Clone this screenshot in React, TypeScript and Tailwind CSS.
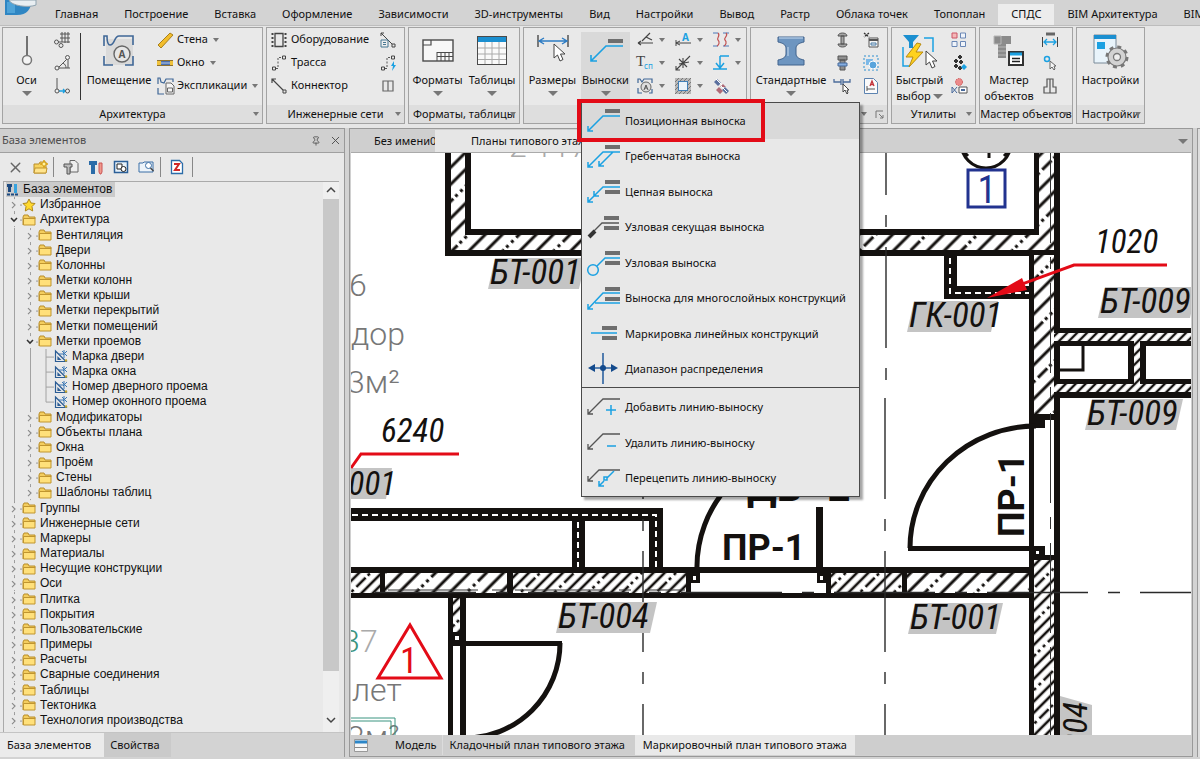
import type { ReactNode } from 'react';
import { X, Pin } from 'lucide-react';

const RIBBON_TABS = [
  'Главная',
  'Построение',
  'Вставка',
  'Оформление',
  'Зависимости',
  '3D-инструменты',
  'Вид',
  'Настройки',
  'Вывод',
  'Растр',
  'Облака точек',
  'Топоплан',
  'СПДС',
  'BIM Архитектура',
  'BIM Конструкции',
];

type TreeItem = { label: string; level: number; kind?: 'star' | 'mark'; open?: boolean; last?: boolean };

const TREE: TreeItem[] = [
  { label: 'Избранное', level: 1, kind: 'star' },
  { label: 'Архитектура', level: 1, open: true },
  { label: 'Вентиляция', level: 2 },
  { label: 'Двери', level: 2 },
  { label: 'Колонны', level: 2 },
  { label: 'Метки колонн', level: 2 },
  { label: 'Метки крыши', level: 2 },
  { label: 'Метки перекрытий', level: 2 },
  { label: 'Метки помещений', level: 2 },
  { label: 'Метки проемов', level: 2, open: true },
  { label: 'Марка двери', level: 3, kind: 'mark' },
  { label: 'Марка окна', level: 3, kind: 'mark' },
  { label: 'Номер дверного проема', level: 3, kind: 'mark' },
  { label: 'Номер оконного проема', level: 3, kind: 'mark', last: true },
  { label: 'Модификаторы', level: 2 },
  { label: 'Объекты плана', level: 2 },
  { label: 'Окна', level: 2 },
  { label: 'Проём', level: 2 },
  { label: 'Стены', level: 2 },
  { label: 'Шаблоны таблиц', level: 2 },
  { label: 'Группы', level: 1 },
  { label: 'Инженерные сети', level: 1 },
  { label: 'Маркеры', level: 1 },
  { label: 'Материалы', level: 1 },
  { label: 'Несущие конструкции', level: 1 },
  { label: 'Оси', level: 1 },
  { label: 'Плитка', level: 1 },
  { label: 'Покрытия', level: 1 },
  { label: 'Пользовательские', level: 1 },
  { label: 'Примеры', level: 1 },
  { label: 'Расчеты', level: 1 },
  { label: 'Сварные соединения', level: 1 },
  { label: 'Таблицы', level: 1 },
  { label: 'Тектоника', level: 1 },
  { label: 'Технология производства', level: 1 },
];

const CYAN = '#1ba1e2';
const INK = '#4a4a4a';
const NAVY = '#3f6797';

const Svg = ({ w = 16, h = 16, children }: { w?: number; h?: number; children: ReactNode }) => (
  <svg width={w} height={h} viewBox={`0 0 ${w} ${h}`} fill="none" className="shrink-0 overflow-visible" aria-hidden="true">
    {children}
  </svg>
);

const Caret = ({ big = false }: { big?: boolean }) =>
  big ? (
    <Svg w={10} h={5}><path d="M0 0h10L5 5z" fill="#777" /></Svg>
  ) : (
    <Svg w={6} h={4}><path d="M0 0h6L3 4z" fill="#777" /></Svg>
  );

/* ---------- large ribbon icons ---------- */

const AxisIcon = () => (
  <Svg w={32} h={32}>
    <path d="M16 1v20" stroke={INK} strokeWidth="1.5" />
    <circle cx="16" cy="25" r="4.5" stroke="#777" strokeWidth="1.5" fill="#f4f4f4" />
  </Svg>
);

const RoomIcon = () => (
  <Svg w={32} h={32}>
    <rect x="3" y="4" width="27" height="26" fill="#dadada" />
    <path d="M1 11V1h3c0 4 0 9 3 9 5 0 4-9 9-9h14v9M1 21v9h9M22 30h8v-9" stroke={NAVY} strokeWidth="1.6" />
    <circle cx="19" cy="19" r="8" stroke="#666" strokeWidth="1.4" fill="#e6e6e6" />
    <text x="19" y="23" textAnchor="middle" fontSize="10" fontWeight="bold" fill="#555">A</text>
  </Svg>
);

const FormatsIcon = () => (
  <Svg w={32} h={32}>
    <rect x="1" y="5" width="30" height="21" stroke={INK} fill="#f7f7f7" strokeWidth="1.4" />
    <path d="M1 10h8V5" stroke={INK} strokeWidth="1.2" />
    <path d="M15 17.5h16M15 21.5h16M15 17v9M19 17v9M23 17v9M27 17v9" stroke={INK} />
  </Svg>
);

const TablesIcon = () => (
  <Svg w={32} h={32}>
    <rect x="1.5" y="1.5" width="29" height="28" stroke={INK} fill="#fafafa" />
    <rect x="2" y="2" width="28" height="5" fill="#1b8fd0" />
    <path d="M2 13h28M2 19h28M2 24.5h28M9 7v22M16 7v22M23 7v22" stroke="#aaa" />
  </Svg>
);

const CursorShape = ({ x, y }: { x: number; y: number }) => (
  <path
    transform={`translate(${x} ${y})`}
    d="M0 0v14l3.5-3 2.5 6 3-1.5-2.5-5.5H11z"
    fill="#fff"
    stroke="#444"
  />
);

const DimensionsIcon = () => (
  <Svg w={32} h={32}>
    <path d="M1 0v12M31 0v12" stroke={INK} strokeWidth="1.4" />
    <path d="M2 6h28M7 3 2 6l5 3M25 3l5 3-5 3" stroke="#2d7cc4" strokeWidth="1.4" />
    <CursorShape x={17} y={9} />
  </Svg>
);

const LeadersIcon = () => (
  <Svg w={34} h={32}>
    <rect x="19" y="4" width="15" height="4" fill="#6e6e6e" />
    <path d="M34 11H17L2 26M2 20v6h6" stroke={CYAN} strokeWidth="1.6" />
  </Svg>
);

const BeamIcon = () => (
  <Svg w={32} h={32}>
    <path
      d="M3 2h26v5c-5 1-8 3-8 6v6c0 3 3 5 8 6v5H3v-5c5-1 8-3 8-6v-6c0-3-3-5-8-6z"
      fill="#6d95c0"
      stroke="#41638d"
      strokeLinejoin="round"
    />
    <path d="M4 3h24M13 12v9" stroke="#a9c4df" strokeWidth="1.5" />
  </Svg>
);

const QuickSelectIcon = () => (
  <Svg w={36} h={32}>
    <path d="M1 0h16l-6 7v6H7V7z" fill="#1b8fd0" />
    <path d="M22 3h9v14M1 12v19h7" stroke={CYAN} strokeWidth="1.5" />
    <path d="M15 8 4 22h7L7 32 21 17h-7l5-8z" fill="#ffd21f" stroke="#b88a12" />
    <CursorShape x={24} y={16} />
  </Svg>
);

const WizardIcon = () => (
  <Svg w={32} h={32}>
    <path d="M1 1h17v8H1zM5 9h8v14H5z" fill="#8b8b8b" />
    <path d="M1 1h7v8H1zM5 12h8M5 16h8M5 20h8" stroke="#b7b7b7" />
    <rect x="16" y="17" width="14" height="13" fill="#fff" stroke="#333" strokeWidth="2" />
    <path d="M17 19h12" stroke={CYAN} strokeWidth="3" />
    <path d="M19 23.5h8M19 26.5h8" stroke="#222" strokeWidth="1.5" />
  </Svg>
);

const SettingsIcon = () => (
  <Svg w={36} h={32}>
    <path d="M1 0h22v28H1z" fill="#e9f4fb" stroke="#7a8b99" />
    <path d="M1 0h22v4H1z" fill="#1b8fd0" />
    <path d="M4 7h8v7H4z" fill={CYAN} />
    <circle cx="24" cy="22" r="10" stroke="#777" strokeWidth="3" strokeDasharray="3.9 3.95" />
    <circle cx="24" cy="22" r="9" fill="#d2d2d2" stroke="#777" strokeWidth="1.2" />
    <circle cx="24" cy="22" r="3.5" fill="#eee" stroke="#777" strokeWidth="1.3" />
  </Svg>
);

/* ---------- small ribbon icons ---------- */

const GridAxes = () => (
  <Svg>
    <path d="M6 2h10M6 6h10M4 10h12M8 0v10M11 0v11M14 0v11" stroke="#555" />
    <circle cx="2.5" cy="10" r="2" stroke="#555" /><circle cx="7" cy="13.5" r="2" stroke="#555" />
  </Svg>
);

const ArcAxes = () => (
  <Svg>
    <path d="M4 13h12M5 12l8-8M14 5v8M9 8c2 1 3 3 3 5" stroke="#555" />
    <circle cx="3" cy="13" r="2" stroke="#555" fill="#eee" /><circle cx="13.5" cy="2.5" r="2" stroke="#555" fill="#eee" />
  </Svg>
);

const AxisShift = () => (
  <Svg>
    <path d="M3 0v11" stroke="#555" /><path d="M5 13h7M9 11l2 2-2 2" stroke={CYAN} strokeWidth="1.3" />
    <circle cx="3" cy="13" r="2" stroke="#555" fill="#eee" /><circle cx="13.5" cy="13" r="2" stroke="#555" fill="#eee" />
  </Svg>
);

const WallIcon = () => (
  <Svg>
    <path d="M1 13 13 1l3 2L4 16z" fill="#f2bd2c" stroke="#a8801c" />
  </Svg>
);

const WindowIcon = () => (
  <Svg>
    <path d="M0 5h16v6H0z" fill="#f0c23b" /><path d="M4 5h9v6H4z" fill="#4a6fae" />
    <path d="M0 5.5h16M0 10.5h16" stroke="#8d7130" />
    <path d="M4 8h9" stroke="#b8cdea" />
  </Svg>
);

const ExplicationIcon = () => (
  <Svg w={18} h={18}>
    <path d="M1 7V1h2l1 4 3 1 2-4h7v3M1 11v6h6" stroke={NAVY} strokeWidth="1.2" />
    <path d="M9 6h5l3 3v8H9z" fill="#f5f5f5" stroke="#666" /><path d="M10.5 11h5v4h-5z" stroke="#666" />
  </Svg>
);

const EquipmentIcon = () => (
  <Svg>
    <path d="M4 1.5h8v13H4z" stroke="#444" strokeWidth="1.3" />
    <path d="M1.5 1v14M14.5 1v14" stroke="#444" strokeWidth="2" strokeDasharray="2 2" />
  </Svg>
);

const RouteIcon = () => (
  <Svg>
    <path d="M5 13.5h2v-11h4" stroke="#555" strokeDasharray="2 1.5" />
    <path d="M1.5 12h3v3h-3zM11.5 1h3v3h-3z" stroke="#444" />
  </Svg>
);

const ConnectorIcon = () => (
  <Svg>
    <path d="m1 1 11 11M1 5V1h4" stroke="#444" strokeWidth="1.2" /><path d="M12 12h3v3h-3z" stroke="#444" />
  </Svg>
);

const EquipLeader = () => (
  <Svg>
    <path d="m1 1 11 11M1 4V1h3M12 12h3v3h-3z" stroke="#444" /><path d="M1 8h7v7H1z" fill="#eee" stroke="#477791" />
    <path d="M3 10.5h3M3 12.5h3" stroke="#477791" />
  </Svg>
);

const RouteElectric = () => (
  <Svg>
    <path d="M5 13.5h2v-11h4" stroke="#555" strokeDasharray="2 1.5" />
    <path d="M1.5 12h3v3h-3zM11.5 1h3v3h-3z" stroke="#444" /><path d="m14 6-3 5h2l-1 5 4-6h-2z" fill={CYAN} />
  </Svg>
);

const BookIcon = () => (
  <Svg><path d="M3 3h10v10H3zM8 3v10" stroke="#666" strokeWidth="1.2" /></Svg>
);

const LevelMark = () => (
  <Svg><path d="M1 11h15M1 11l3-2M1 11l3 2M5 9l8-8M9 5l6 3" stroke="#444" strokeWidth="1.2" /></Svg>
);

const TextSp = () => (
  <Svg>
    <text x="-1" y="11" fontSize="15" fontFamily="Liberation Serif, serif" fill="#444">T</text>
    <text x="7" y="14" fontSize="8" fontFamily="Noto Sans, sans-serif" fill={CYAN}>сп</text>
  </Svg>
);

const RoomMark = () => (
  <Svg>
    <path d="M1 5V1h2l2 3 2-3h8v4M1 10v5h4M12 15h3v-4" stroke={NAVY} strokeWidth="1.2" />
    <circle cx="9" cy="9" r="5" fill="#ddd" stroke="#666" /><path d="m7 12 2-5 2 5M8 10h2" stroke="#555" />
  </Svg>
);

const TextLeader = () => (
  <Svg>
    <text x="7" y="9" fontSize="10" fontWeight="bold" fontFamily="Noto Sans, sans-serif" fill={CYAN}>A</text>
    <path d="M1 8v6M1 11h15M1 11l4-2M1 11l4 2" stroke="#444" />
  </Svg>
);

const BreakMark = () => (
  <Svg><path d="M1 15 15 1M4 4l8 8M8 3v10M4 9l10-2M1 11v4h4" stroke="#444" strokeWidth="1.1" /></Svg>
);

const FrameIcon = () => (
  <Svg>
    <rect width="16" height="16" fill="#b8b8b8" />
    <path d="M0 4 4 0M0 8l8-8M0 12 12 0M0 16 16 0M4 16 16 4M8 16l8-8M12 16l4-4" stroke="#777" />
    <rect x="3.5" y="3.5" width="9" height="9" fill="#eaf3fa" stroke="#3f7fb8" />
  </Svg>
);

const BreakLines = () => (
  <Svg>
    <path d="M0 1h5M10 1h6M0 14h5M10 14h6" stroke="#4a78b8" />
    <path d="M5 1c3 3-2 5 0 7s1 5-1 6M13 1c3 3-3 5-1 7s1 5-1 6" stroke="#c25353" strokeWidth="1.2" />
  </Svg>
);

const ElevationIcon = () => (
  <Svg><path d="M0 14h14M7 1v12M3 8l4 5 4-5M7 1h9" stroke={CYAN} strokeWidth="1.5" /></Svg>
);

const HatchMarks = () => (
  <Svg>
    <path d="m1 4 3-3 4 4-3 3zM9 12l3-3 4 4-3 3z" fill="#5a6f9e" /><path d="m7 9 3-3 3 3M3 12l3-3 4 4-3 3z" fill="#b06a76" />
    <path d="m3 1 6 6M8 8l6 6" stroke="#fff" />
  </Svg>
);

const BoltIcon = () => (
  <Svg>
    <path d="M4 4c0-4 9-4 9 0zM7 4h3v8H7zM4 12h9c0 4-9 4-9 0z" fill="#a5a5a5" stroke="#555" />
  </Svg>
);

const NutIcon = () => (
  <Svg>
    <path d="M4 1h9v4H4zM6 5h5v10H6z" fill="#8f8f8f" stroke="#555" /><path d="M4 8h9v3H4z" fill="#86aee0" stroke="#466a9b" />
  </Svg>
);

const WeldIcon = () => (
  <Svg>
    <path d="M0 1v3h7v3M16 1v3H9v3M7 1v3M9 1v3" stroke="#4c6c9b" strokeWidth="1.3" />
    <path d="M9 6v8l2-2 2 4 1-1-1-3h2z" fill="#fff" stroke="#444" />
  </Svg>
);

const SchemaIcon = () => (
  <Svg>
    <path d="m1 1 5 4M6 1 1 5" stroke="#333" strokeWidth="1.3" strokeDasharray="2 1" />
    <path d="M6 6h9v9H6z" fill="#f5f5f5" stroke="#555" /><path d="M6 8h9" stroke="#555" strokeWidth="2" /><path d="M8 11h5v2H8z" stroke="#477ba6" />
  </Svg>
);

const RegionIcon = () => (
  <Svg>
    <rect x="1" y="1" width="14" height="14" stroke="#2c8fd0" strokeDasharray="2 2" />
    <path d="M3 4h7v6H3z" fill="#7cb9e8" /><circle cx="10" cy="10" r="4" fill="#58a4dc" stroke="#fff" />
  </Svg>
);

const SheetIcon = () => (
  <Svg>
    <path d="M1.5.5h9l4 4v11h-13z" fill="#fafafa" stroke="#5c83b0" />
    <path d="m7 8 2-5 2 5M8 6.5h2" stroke="#c4343a" strokeWidth="1.3" /><path d="M4 8v5M4 11h8" stroke="#555" />
  </Svg>
);

const ObjectsIcon = () => (
  <Svg>
    <path d="M1 1h5v5H1z" fill="#f4b8b8" stroke="#c56" /><path d="M9.5 1h5v5h-5zM1 9.5h5v5H1zM9.5 9.5h5v5h-5z" fill="#f0f4fa" stroke="#6a87b5" />
  </Svg>
);

const PatternIcon = () => (
  <Svg>
    <path d="m9 0 2 2-2 2-2-2zM5 4l2 2-2 2-2-2zM10 5l2 2-2 2-2-2zM5 9l2 2-2 2-2-2zM9 11l2 2-2 2-2-2z" fill="#333" stroke="#333" />
    <path d="m13 9 3 3-3 3-3-3z" fill={CYAN} />
  </Svg>
);

const FindObjects = () => (
  <Svg>
    <circle cx="8" cy="4" r="3.5" fill="#ec8a8a" stroke="#c55" strokeDasharray="1.5 1" />
    <path d="m1 9 5 6M6 9l-5 6M1 9v6" stroke="#47699b" /><path d="M8 9h8v6H8z" fill="#fff" stroke="#555" /><path d="M10 12h4" stroke="#47699b" strokeWidth="2" />
  </Svg>
);

const WidthIcon = () => (
  <Svg>
    <path d="M4 2h9" stroke="#666" strokeWidth="3" /><path d="M.5 5v10M15.5 5v10" stroke="#444" />
    <path d="M2 10h12M5 7l-3 3 3 3M11 7l3 3-3 3" stroke={CYAN} strokeWidth="1.3" />
  </Svg>
);

const PickIcon = () => (
  <Svg>
    <circle cx="5" cy="4" r="2.5" stroke={CYAN} strokeWidth="1.5" />
    <path d="M8 6v8l2-2 2 3 1-1-1-3h2z" fill="#f5f5f5" stroke="#666" />
  </Svg>
);

const ProfileIcon = () => (
  <Svg><path d="M5 1h6v8h3v6H2V9h3zM8 1v14" stroke="#555" strokeWidth="1.2" /></Svg>
);

/* ---------- ribbon building blocks ---------- */

const RibbonGroup = ({ title, className, launcher, children }: { title: string; className: string; launcher?: boolean; children: ReactNode }) => (
  <section className={`flex shrink-0 flex-col border border-[#a3a3a3] bg-[#e9e9e9] ${className}`}>
    <div className="flex min-h-0 flex-1">{children}</div>
    <div className="relative flex h-[18px] items-center justify-center bg-[#dedede]">
      <span className="whitespace-nowrap">{title}</span>
      <span className="absolute inset-y-0 right-[3px] flex items-center gap-2">
        <Caret />
        {launcher && (
          <Svg w={9} h={9}><path d="M1 8V1h7M4 4l4 4M8 5v3H5" stroke="#777" /></Svg>
        )}
      </span>
    </div>
  </section>
);

const BigButton = ({ icon, label, second, caret = true, className }: { icon: ReactNode; label: string; second?: string; caret?: boolean; className: string }) => (
  <button type="button" className={`flex shrink-0 flex-col items-center whitespace-nowrap ${className}`}>
    {icon}
    <span className="mt-[5px] leading-4">{label}</span>
    {second ? (
      <span className="flex items-center gap-[2px] leading-4">
        {second}
        {caret && <Caret big />}
      </span>
    ) : (
      caret && <span className="mt-[3px]"><Caret big /></span>
    )}
  </button>
);

const SmallColumn = ({ items, caret, className }: { items: { name: string; icon: ReactNode; plain?: boolean }[]; caret?: boolean; className: string }) => (
  <div className={`flex shrink-0 flex-col ${className}`}>
    {items.map((item) => (
      <button key={item.name} type="button" aria-label={item.name} className="flex h-[23px] items-center gap-[6px]">
        {item.icon}
        {caret && !item.plain && <Caret />}
      </button>
    ))}
  </div>
);

const LabelRow = ({ icon, label, caret }: { icon: ReactNode; label: string; caret?: boolean }) => (
  <button type="button" className="flex h-[23px] items-center whitespace-nowrap">
    <span className="w-5">{icon}</span>
    <span className="mr-[5px]">{label}</span>
    {caret && <Caret />}
  </button>
);

/* ---------- leader menu ---------- */

const Bars = ({ double = false, x = 18 }: { double?: boolean; x?: number }) => (
  <>
    <rect x={x} y="0" width="15" height="4" fill="#6e6e6e" />
    {double && <rect x={x} y="10" width="15" height="4" fill="#6e6e6e" />}
  </>
);

const MENU_TOP = [
  {
    label: 'Позиционная выноска',
    icon: <><Bars /><path d="M33 7H16L1 22M1 17v5h5" stroke={CYAN} strokeWidth="1.5" /></>,
  },
  {
    label: 'Гребенчатая выноска',
    icon: <><Bars /><path d="M33 7H16L1 22M1 17v5h5M26 7 12 21M12 16v5h5" stroke={CYAN} strokeWidth="1.5" /></>,
  },
  {
    label: 'Цепная выноска',
    icon: <><Bars double /><path d="M33 7H16L1 22M1 17v5h5M7 11v5h5" stroke={CYAN} strokeWidth="1.5" /></>,
  },
  {
    label: 'Узловая секущая выноска',
    icon: <><Bars double x={17} /><path d="M32 7H15L2 20" stroke="#555" strokeWidth="1.3" /><path d="m2 21 6-6" stroke="#333" strokeWidth="4" /></>,
  },
  {
    label: 'Узловая выноска',
    icon: <><Bars double /><path d="M33 7H18l-8 8" stroke={CYAN} strokeWidth="1.5" /><circle cx="6" cy="19" r="5.3" stroke={CYAN} strokeWidth="1.5" /></>,
  },
  {
    label: 'Выноска для многослойных конструкций',
    icon: <><Bars double /><path d="M33 6H16L1 22M1 17v5h5M33 16H8" stroke={CYAN} strokeWidth="1.5" /></>,
  },
  {
    label: 'Маркировка линейных конструкций',
    icon: <g transform="translate(0 4)"><Bars double x={15} /><path d="M4 7h26" stroke={CYAN} strokeWidth="1.5" /></g>,
  },
  {
    label: 'Диапазон распределения',
    icon: (
      <>
        <path d="M16 -5v31M5 10h22" stroke="#2c62a0" strokeWidth="1.6" />
        <path d="m1 10 7-4v8zM31 10l-7-4v8z" fill="#134a8c" />
        <circle cx="16" cy="10" r="3" fill="#134a8c" />
      </>
    ),
  },
];

const MENU_BOTTOM = [
  {
    label: 'Добавить линию-выноску',
    icon: <><path d="M33 3H16L1 18M1 13v5h5" stroke="#555" strokeWidth="1.3" /><path d="M19 14h10M24 9v10" stroke={CYAN} strokeWidth="1.5" /></>,
  },
  {
    label: 'Удалить линию-выноску',
    icon: <><path d="M33 3H16L1 18M1 13v5h5" stroke="#555" strokeWidth="1.3" /><path d="M20 15h9" stroke={CYAN} strokeWidth="1.5" /></>,
  },
  {
    label: 'Перецепить линию-выноску',
    icon: <><path d="M33 3H12L1 14M1 9v5h5" stroke="#555" strokeWidth="1.3" /><path d="m27 4-7 7M17 14l-5 5M12 14v5h5M17 10h3v3h-3z" stroke={CYAN} strokeWidth="1.5" /></>,
  },
];

const MenuItem = ({ label, icon, active }: { label: string; icon: ReactNode; active?: boolean }) => (
  <button
    type="button"
    role="menuitem"
    className={`relative flex w-full items-center gap-[4px] pl-[5px] text-left whitespace-nowrap ${active ? 'bg-[#d9d9d9]' : ''}`}
  >
    <svg width="34" height="23" viewBox="0 0 34 23" fill="none" className="shrink-0 overflow-visible" aria-hidden="true">{icon}</svg>
    <span>{label}</span>
    {active && <span className="absolute -top-1 -left-[5px] h-[43px] w-[188px] border-4 border-[#e30b17]" />}
  </button>
);

const LeaderMenu = () => (
  <div role="menu" className="absolute top-[70px] left-0 z-20 w-[279px] border border-[#4a4a4a] bg-[#e8e8e8] shadow-[3px_3px_2px_rgba(0,0,0,0.35)]">
    <div className="grid h-[284px] auto-rows-fr">
      {MENU_TOP.map((item, i) => (
        <MenuItem key={item.label} {...item} active={i === 0} />
      ))}
    </div>
    <div className="grid h-[109px] auto-rows-fr border-t border-[#4a4a4a] pt-[2px]">
      {MENU_BOTTOM.map((item) => (
        <MenuItem key={item.label} {...item} />
      ))}
    </div>
  </div>
);

const Ribbon = () => (
  <div className="flex h-[103px] gap-[3px] border-t border-[#bdbdbd] bg-[#e6e6e6] px-[2px] pt-px pb-[4px]">
    <RibbonGroup title="Архитектура" className="w-[261px]">
      <BigButton icon={<AxisIcon />} label="Оси" className="w-[47px] pt-[7px]" />
      <SmallColumn
        className="w-[30px] pl-[4px]"
        items={[
          { name: 'Сетка осей', icon: <GridAxes /> },
          { name: 'Полярные оси', icon: <ArcAxes /> },
          { name: 'Сдвиг оси', icon: <AxisShift /> },
        ]}
      />
      <div className="mt-[5px] h-[67px] w-px bg-[#333]" />
      <BigButton icon={<RoomIcon />} label="Помещение" caret={false} className="w-[76px] pt-[7px]" />
      <div className="flex flex-col">
        <LabelRow icon={<WallIcon />} label="Стена" caret />
        <LabelRow icon={<WindowIcon />} label="Окно" caret />
        <LabelRow icon={<ExplicationIcon />} label="Экспликации" caret />
      </div>
    </RibbonGroup>

    <RibbonGroup title="Инженерные сети" className="w-[139px]">
      <div className="flex w-[108px] flex-col pl-[4px]">
        <LabelRow icon={<EquipmentIcon />} label="Оборудование" />
        <LabelRow icon={<RouteIcon />} label="Трасса" />
        <LabelRow icon={<ConnectorIcon />} label="Коннектор" />
      </div>
      <SmallColumn
        className="pl-[5px]"
        items={[
          { name: 'Выноска оборудования', icon: <EquipLeader /> },
          { name: 'Электрическая трасса', icon: <RouteElectric /> },
          { name: 'Каталог', icon: <BookIcon /> },
        ]}
      />
    </RibbonGroup>

    <RibbonGroup title="Форматы, таблицы" className="w-[112px]">
      <BigButton icon={<FormatsIcon />} label="Форматы" className="w-[57px] pt-[7px]" />
      <BigButton icon={<TablesIcon />} label="Таблицы" className="w-[52px] pt-[7px]" />
    </RibbonGroup>

    <RibbonGroup title="" className="w-[224px]">
      <BigButton icon={<DimensionsIcon />} label="Размеры" className="w-[57px] pt-[7px]" />
      <div className="relative mt-[4px]">
        <BigButton icon={<LeadersIcon />} label="Выноски" className="h-[70px] w-[49px] bg-[#d9d9d9] pt-[3px]" />
        <LeaderMenu />
      </div>
      <SmallColumn
        caret
        className="w-[38px] pl-[7px]"
        items={[
          { name: 'Отметка уровня', icon: <LevelMark /> },
          { name: 'Текст СП', icon: <TextSp /> },
          { name: 'Метка помещения', icon: <RoomMark /> },
        ]}
      />
      <SmallColumn
        caret
        className="w-[38px] pl-[7px]"
        items={[
          { name: 'Текстовая выноска', icon: <TextLeader /> },
          { name: 'Обрыв', icon: <BreakMark /> },
          { name: 'Рамка', icon: <FrameIcon /> },
        ]}
      />
      <SmallColumn
        caret
        className="w-[38px] pl-[7px]"
        items={[
          { name: 'Линии обрыва', icon: <BreakLines /> },
          { name: 'Отметка высоты', icon: <ElevationIcon /> },
          { name: 'Штриховка', icon: <HatchMarks />, plain: true },
        ]}
      />
    </RibbonGroup>

    <RibbonGroup title="" className="w-[138px]" launcher>
      <BigButton icon={<BeamIcon />} label="Стандартные" className="w-[80px] pt-[7px]" />
      <SmallColumn
        className="w-[28px] pl-[3px]"
        items={[
          { name: 'Болт', icon: <BoltIcon /> },
          { name: 'Гайка', icon: <NutIcon /> },
          { name: 'Сварной шов', icon: <WeldIcon /> },
        ]}
      />
      <SmallColumn
        className="w-[24px] pl-[4px]"
        items={[
          { name: 'Схема', icon: <SchemaIcon /> },
          { name: 'Область', icon: <RegionIcon /> },
          { name: 'Лист', icon: <SheetIcon /> },
        ]}
      />
    </RibbonGroup>

    <RibbonGroup title="Утилиты" className="w-[85px]">
      <BigButton icon={<QuickSelectIcon />} label="Быстрый" second="выбор" className="w-[55px] pt-[7px]" />
      <SmallColumn
        className="pl-[4px]"
        items={[
          { name: 'Группа объектов', icon: <ObjectsIcon /> },
          { name: 'Узор', icon: <PatternIcon /> },
          { name: 'Поиск объектов', icon: <FindObjects /> },
        ]}
      />
    </RibbonGroup>

    <RibbonGroup title="Мастер объектов" className="w-[94px]">
      <BigButton icon={<WizardIcon />} label="Мастер" second="объектов" caret={false} className="w-[58px] pt-[7px]" />
      <SmallColumn
        className="pl-[4px]"
        items={[
          { name: 'Ширина', icon: <WidthIcon /> },
          { name: 'Указать', icon: <PickIcon /> },
          { name: 'Профиль', icon: <ProfileIcon /> },
        ]}
      />
    </RibbonGroup>

    <RibbonGroup title="Настройки" className="w-[69px]">
      <BigButton icon={<SettingsIcon />} label="Настройки" caret={false} className="w-[67px] pt-[7px]" />
    </RibbonGroup>
  </div>
);

/* ---------- element base panel ---------- */

const FolderIcon = () => (
  <Svg w={14} h={12}>
    <path d="M1 11V3l1-2h4l1 2h6v2" fill="#f3cd5e" stroke="#b98e2b" />
    <path d="M1.5 11V4.5H13V11z" fill="#ffe07a" stroke="#c0952f" />
  </Svg>
);

const StarIcon = () => (
  <Svg w={14} h={14}>
    <path d="m7 1 2 4 4 .5-3 3 .7 4.5L7 10.8 3.3 13 4 8.500l-3-3L5 5z" fill="#ffd92e" stroke="#b08718" />
  </Svg>
);

const MarkIcon = () => (
  <Svg w={14} h={14}>
    <path d="M1.5 2v10.5H12zM4 8.5v2h2z" stroke="#2b5c94" strokeWidth="1.2" />
    <path d="M5 5h5M10 1v8M8 2l5 5M13 2 9 6" stroke="#3c78b5" /><path d="m11 12 2-1" stroke="#c6a52c" strokeWidth="2" />
  </Svg>
);

const BaseIcon = () => (
  <Svg w={13} h={13}>
    <path d="M1 1h5v3H5v5H2V4H1z" fill="#1d4a80" /><path d="M8 1h3v9H8z" fill="#38a3de" /><path d="M1 11.5h11" stroke="#1d4a80" strokeWidth="2" strokeDasharray="3 1" />
  </Svg>
);

const TreeRow = ({ item }: { item: TreeItem }) => (
  <li role="treeitem" className="flex min-h-0 items-stretch">
    {Array.from({ length: item.level - 1 }, (_, i) => (
      <span key={i} className="flex w-4 justify-center">
        <span className="w-px bg-[#a2a2a2]" />
      </span>
    ))}
    <svg width="16" height="100%" viewBox="0 0 16 15" fill="none" aria-hidden="true">
      {item.level === 3 ? (
        <path d={item.last ? 'M8 -1v9h8' : 'M8 -1v17M8 8h8'} stroke="#a2a2a2" />
      ) : (
        <>
          <path d="M8.5 0v2M8.5 14v1" stroke="#999" />
          {item.open ? (
            <path d="m5 6 3 3 3-3" stroke="#333" strokeWidth="1.5" />
          ) : (
            <path d="m6 5 3 3-3 3" stroke="#8a8a8a" strokeWidth="1.2" />
          )}
          <path d="M14 8h2" stroke="#999" />
        </>
      )}
    </svg>
    <button type="button" className="flex items-center gap-[4px] whitespace-nowrap">
      {item.kind === 'star' ? <StarIcon /> : item.kind === 'mark' ? <MarkIcon /> : <FolderIcon />}
      <span className="leading-[15px]">{item.label}</span>
    </button>
  </li>
);

const PanelTool = ({ name, children }: { name: string; children: ReactNode }) => (
  <button type="button" aria-label={name} className="flex w-[25px] justify-center">{children}</button>
);

const ElementBasePanel = () => (
  <aside className="flex w-[345px] shrink-0 flex-col border-t border-r border-[#999] bg-[#e9e9e9]">
    <header className="flex h-[24px] shrink-0 items-center gap-2 border-b border-[#a0a0a0] bg-[#d0d0d0] pr-[2px] pl-[2px] text-[#4d4d4d]">
      <h2 className="flex-1">База элементов</h2>
      <button type="button" aria-label="Закрепить"><Pin size={10} /></button>
      <button type="button" aria-label="Закрыть"><X size={13} strokeWidth={1.75} /></button>
    </header>

    <div className="flex h-[28px] shrink-0 items-center pl-[3px]">
      <PanelTool name="Удалить"><X size={17} color="#666" /></PanelTool>
      <PanelTool name="Новая папка">
        <Svg><path d="M1 14V5h5l1-2h6v11z" fill="#f7d35e" stroke="#b98e2b" /><path d="M2 9h12l-1 5H1z" fill="#ffe48d" stroke="#c0952f" /><path d="m11 1 1 3 3 1-3 1-1 3-1-3-3-1 3-1z" fill="#fff3a0" stroke="#d9a520" /></Svg>
      </PanelTool>
      <span className="mr-[4px] h-[20px] w-px bg-[#888]" />
      <PanelTool name="Копировать">
        <Svg><path d="M7 1.5h5l3 3V13H7z" fill="#eee" stroke="#666" /><path d="M1 5h8v3H7v7H4V8H1z" fill="#bbb" stroke="#555" /></Svg>
      </PanelTool>
      <PanelTool name="Изменить">
        <Svg><path d="M1 2h8v4H7v9H3V6H1z" fill="#2b6ca8" /><path d="M11 4h3v9l-1 2h-1l-1-2z" fill="#ef9a8e" stroke="#c55" /></Svg>
      </PanelTool>
      <PanelTool name="Вставить блок">
        <Svg><path d="M1.5 2.5h13v11h-13z" fill="#e6f1fa" stroke="#2b5f98" strokeWidth="1.5" /><path d="M4 5h5v5H4z" fill="#fff" stroke="#222" /><circle cx="10.5" cy="10" r="2.5" fill="#fff" stroke="#222" /></Svg>
      </PanelTool>
      <PanelTool name="Найти">
        <Svg><path d="M1 13V4h4l1-1h9v10z" stroke="#3b6fa6" fill="#edf4fa" /><circle cx="10.5" cy="6.5" r="3" fill="#fff" stroke="#3b6fa6" /><path d="m12.5 9 3 3" stroke="#444" strokeWidth="1.5" /></Svg>
      </PanelTool>
      <span className="ml-[2px] h-[20px] w-px bg-[#888]" />
      <span className="ml-[3px] flex">
        <PanelTool name="Обновить">
          <Svg><path d="M2.5 1.5h8l3 3v10h-11z" fill="#fff" stroke="#2b6ca8" strokeWidth="1.3" /><path d="M5 5h5l-4 6h5" stroke="#d02828" strokeWidth="2" /></Svg>
        </PanelTool>
      </span>
      <span className="ml-[3px] h-[20px] w-px bg-[#888]" />
    </div>

    <div className="mr-[5px] ml-[3px] flex min-h-0 flex-1 border-t border-l border-[#aaa] font-['Liberation_Sans',Arial,sans-serif] text-[12px]">
      <ul role="tree" className="grid min-w-0 flex-1 auto-rows-fr overflow-hidden pb-[4px] pl-[2px]">
        <li role="treeitem" className="flex items-stretch">
          <button type="button" className="flex items-center gap-[4px] bg-[#cbcbcb] pr-[3px] whitespace-nowrap">
            <BaseIcon />
            <span className="leading-[15px]">База элементов</span>
          </button>
        </li>
        {TREE.map((item) => (
          <TreeRow key={item.label} item={item} />
        ))}
      </ul>
      <div className="flex w-[16px] flex-col bg-[#efefef]">
        <button type="button" aria-label="Прокрутить вверх" className="flex h-[17px] items-center justify-center">
          <Svg w={10} h={7}><path d="m1 5 4-4 4 4" stroke="#444" strokeWidth="1.5" /></Svg>
        </button>
        <div className="grow-[23] bg-[#c8c8c8]" />
        <div className="grow-[2]" />
        <button type="button" aria-label="Прокрутить вниз" className="mb-[4px] flex h-[16px] items-center justify-center">
          <Svg w={10} h={7}><path d="m1 1 4 4 4-4" stroke="#444" strokeWidth="1.5" /></Svg>
        </button>
      </div>
    </div>

    <div className="flex h-[25px] shrink-0 items-stretch border-t border-[#c4c4c4] bg-[#d3d3d3]">
      <button type="button" className="bg-[#ebebeb] pr-[13px] pl-[7px]">База элементов</button>
      <button type="button" className="bg-[#cacaca] pr-[11px] pl-[6px]">Свойства</button>
    </div>
  </aside>
);

/* ---------- floor plan ---------- */

const BLACK = '#14110f';
const CAD = "'Roboto Condensed', 'Liberation Sans Narrow', 'Roboto', sans-serif";

type Box = [x: number, y: number, w: number, h: number];

const SOLIDS: Box[] = [
  [445, 153, 6, 102], [465, 153, 6, 82], [465, 229, 590, 6], [445, 250, 610, 6],
  [1034, 153, 5, 82], [1054, 153, 6, 582], [1029, 250, 5, 485], [1029, 414, 31, 6],
  [944, 255, 13, 44], [944, 286, 85, 13],
  [1060, 328, 131, 5], [1060, 341, 131, 5], [1060, 379, 131, 5], [1060, 392, 131, 6],
  [1128, 341, 6, 43], [1140, 341, 6, 43],
  [351, 508, 312, 13], [649, 508, 14, 60], [572, 520, 13, 48],
  [351, 567, 680, 6], [351, 593, 680, 5],
  [380, 568, 5, 28], [507, 568, 6, 28], [686, 568, 5, 28], [826, 568, 5, 28], [902, 568, 5, 28],
  [691, 572, 9, 11], [817, 572, 10, 11], [816, 507, 7, 66],
  [448, 598, 5, 137], [460, 598, 6, 137], [448, 632, 17, 14], [465, 641, 97, 5],
  [908, 546, 121, 5], [1034, 546, 11, 10], [1029, 555, 31, 5], [1034, 420, 11, 8],
];

const WIDE_HATCH: Box[] = [
  [451, 153, 14, 97], [458, 235, 574, 15], [862, 235, 192, 15],
  [1039, 153, 15, 82], [1034, 255, 20, 159], [385, 573, 122, 20], [907, 573, 122, 20],
];

const DENSE_HATCH: Box[] = [
  [351, 573, 29, 20], [513, 573, 173, 20], [831, 573, 71, 20],
  [1034, 560, 20, 175], [453, 598, 7, 34],
];

const FINE_HATCH: Box[] = [[1054, 333, 137, 8], [1054, 384, 137, 8], [1134, 337, 6, 51]];

const CODE_MARKS = [
  { text: 'БТ-001', x: 490, y: 284, w: 91 },
  { text: 'ГК-001', x: 909, y: 327, w: 84 },
  { text: 'БТ-009', x: 1100, y: 313, w: 92 },
  { text: 'БТ-009', x: 1087, y: 425, w: 91 },
  { text: 'БТ-004', x: 558, y: 628, w: 94 },
  { text: 'БТ-001', x: 910, y: 629, w: 88 },
];

const boxes = (list: Box[], fill: string) =>
  list.map(([x, y, w, h]) => <rect key={`${x}-${y}-${w}`} x={x} y={y} width={w} height={h} fill={fill} />);

const FloorPlan = () => (
  <svg
    viewBox="351 153 840 583"
    preserveAspectRatio="xMinYMin slice"
    className="absolute inset-0 h-full w-full"
    fill="none"
    fontFamily={CAD}
    role="img"
    aria-label="План типового этажа"
  >
    <defs>
      <pattern id="wide" width="36" height="30" patternUnits="userSpaceOnUse" patternTransform="rotate(45)">
        <rect width="36" height="30" fill="#fff" />
        <path d="M5 0v30M17 0v30" stroke={BLACK} strokeWidth="3" />
        <path d="M29 0v30" stroke={BLACK} strokeWidth="3" strokeDasharray="13 4 3 4 3 3" />
      </pattern>
      <pattern id="dense" width="24" height="30" patternUnits="userSpaceOnUse" patternTransform="rotate(45)">
        <rect width="24" height="30" fill="#fff" />
        <path d="M3 0v30M11 0v30" stroke={BLACK} strokeWidth="2.6" />
        <path d="M19 0v30" stroke={BLACK} strokeWidth="2.6" strokeDasharray="13 4 3 4 3 3" />
      </pattern>
      <pattern id="fine" width="7" height="7" patternUnits="userSpaceOnUse" patternTransform="rotate(45)">
        <rect width="7" height="7" fill="#fff" />
        <path d="M3 0v7" stroke={BLACK} strokeWidth="2.4" />
      </pattern>
    </defs>

    <rect x="351" y="153" width="840" height="583" fill="#fff" />

    {boxes(SOLIDS, BLACK)}
    {boxes(WIDE_HATCH, 'url(#wide)')}
    {boxes(DENSE_HATCH, 'url(#dense)')}
    {boxes(FINE_HATCH, 'url(#fine)')}
    <path d="M1054 341h6v38h-6z" fill={BLACK} />

    {/* centre lines of insulated partitions */}
    <path
      d="M950 258v35h79M352 515h304v52M578 522v45"
      stroke="#fff"
      strokeWidth="2"
      strokeDasharray="6 4"
    />
    <path d="M1036 551h3v3h-3zM693 576h3v4h-3zM820 576h3v4h-3zM455 636h4v4h-4z" fill="#fff" />

    {/* axes */}
    <path
      d="M886 94V398M885 398V735M643 398V735"
      stroke="#2a2a2a"
      strokeWidth="1.4"
      strokeDasharray="101 20 12 20"
    />
    <path d="M375 592.5H1191" stroke="#2a2a2a" strokeWidth="1.4" strokeDasharray="101 20 12 20" />
    <path d="M1050.5 153V735M388 590h120M515 590h170" stroke="#333" strokeDasharray="90 14 12 14" />

    {/* doors */}
    <path
      d="M1036 426A126 122 0 0 0 910 548M697 570A120 120 0 0 1 817 447M560 643A95 95 0 0 1 465 738"
      stroke={BLACK}
      strokeWidth="5"
    />
    <path d="M1060 370h23v-24" stroke={BLACK} strokeWidth="3" />

    {/* wall codes */}
    {CODE_MARKS.map((mark) => (
      <g key={`${mark.x}-${mark.y}`}>
        <path d={`M${mark.x + 5} ${mark.y - 26}h${mark.w}l-7 31h${-mark.w}z`} fill="#c4c4c4" />
        <text x={mark.x} y={mark.y} fontSize="35" fontStyle="italic" fill={BLACK}>{mark.text}</text>
      </g>
    ))}
    <path d="M351 468h41l-6 31h-35z" fill="#c4c4c4" />
    <text x="396" y="495" fontSize="33" fontStyle="italic" textAnchor="end" fill={BLACK}>-001</text>
    <path d="M1060 696l32 9v31h-32z" fill="#c4c4c4" />
    <text transform="translate(1087 702) rotate(-90)" fontSize="33" fontStyle="italic" textAnchor="end" fill={BLACK}>БТ-004</text>

    {/* lengths on leaders */}
    <text x="381" y="442" fontSize="33" fontStyle="italic" fill={BLACK}>6240</text>
    <path d="m351 468 10-14h98" stroke="#e30b17" strokeWidth="3" />
    <text x="1095" y="253" fontSize="33" fontStyle="italic" fill={BLACK}>1020</text>
    <path d="M1167 265h-93l-60 22" stroke="#e30b17" strokeWidth="3" />
    <path d="m987 298 35-20 5 12z" fill="#e30b17" />

    {/* door labels */}
    <g fontFamily="Roboto, sans-serif" fontWeight="bold" fontSize="36" fill={BLACK}>
      <text x="722" y="560">ПР-1</text>
      <text transform="translate(1024 537) rotate(-90)">ПР-1</text>
      <text x="747" y="501" fontSize="40">ДВ–2</text>
    </g>

    {/* grid bubbles and revision marks */}
    <circle cx="986" cy="143" r="25" stroke={BLACK} strokeWidth="3" />
    <path d="M989 150v8M963 151l5 5M1009 151l-5 5" stroke={BLACK} strokeWidth="3" />
    <rect x="968" y="170" width="37" height="37" stroke="#22338f" strokeWidth="3" />
    <text x="987" y="203" fontSize="38" textAnchor="middle" fill="#22338f">1</text>
    <path d="m410 625 31 53h-63z" stroke="#e30b17" strokeWidth="3" />
    <text x="409" y="673" fontSize="36" textAnchor="middle" fill="#e30b17">1</text>

    {/* room captions */}
    <g fontFamily="Roboto, sans-serif" fontWeight="300" fontSize="32" fill="#777">
      <text x="349" y="296">6</text>
      <text x="351" y="345">дор</text>
      <text x="347" y="393">3м²</text>
      <text x="509" y="157" fill="#aaa">2 117</text>
      <text x="342" y="652" fill="#3b9480">3</text>
      <text x="360" y="652" fill="#aaa">7</text>
      <text x="352" y="701">лет</text>
      <text x="347" y="748">2м²</text>
    </g>
    <path d="M351 718h44v18M351 721h40v15" stroke="#3b9480" />
  </svg>
);

const DrawingArea = () => (
  <main className="flex min-w-0 flex-1 flex-col border border-[#999] bg-[#d0d0d0] p-px">
    <div className="flex h-[23px] shrink-0 items-stretch border-b border-[#aaa]">
      <button type="button" className="w-[84px] overflow-hidden bg-[#cfcfcf] pl-[23px] text-left whitespace-nowrap">Без имени0</button>
      <button type="button" className="bg-[#e6e6e6] pr-6 pl-9 whitespace-nowrap">Планы типового этажа</button>
      <button type="button" aria-label="Список документов" className="ml-auto pr-[3px]"><Caret big /></button>
    </div>
    <div className="relative min-h-0 flex-1 overflow-hidden">
      <FloorPlan />
    </div>
    <div className="flex h-[20px] shrink-0 items-stretch bg-[#cecece] whitespace-nowrap">
      <button type="button" aria-label="Листы" className="flex w-[39px] items-center pl-[3px]">
        <Svg w={14} h={13}><path d="M.5.5h13v12H.5z" fill="#f7f7f7" stroke="#999" /><path d="M1 3h12" stroke="#2c86c8" strokeWidth="3" /><path d="M1 8.5h12" stroke="#888" /></Svg>
      </button>
      <button type="button" className="border-r border-[#dcdcdc] px-[5px]">Модель</button>
      <button type="button" className="pr-[10px] pl-[7px]">Кладочный план типового этажа</button>
      <button type="button" className="bg-[#e9e9e9] px-[8px]">Маркировочный план типового этажа</button>
    </div>
  </main>
);

const App = () => {
  return (
    <div className="flex h-screen flex-col overflow-hidden bg-[#d3d3d3] font-['Noto_Sans','Open_Sans',sans-serif] text-[11px] text-[#111]">
      <nav className="flex h-[25px] shrink-0 items-stretch overflow-hidden pl-[5px]">
        <button type="button" aria-label="Меню приложения" className="w-[37px] shrink-0 self-start">
          <Svg w={32} h={16}>
            <path d="M0 0h27c-1 9-5 15-15 15H0z" fill="#2f86c3" />
            <path d="M2 2h8v11H2z" fill="#4ea3d8" />
            <path d="M4 0c2 6 20 8 27 5V0z" fill="#e8eef2" stroke="#8fa3b0" />
          </Svg>
        </button>
        {RIBBON_TABS.map((tab) => (
          <button
            key={tab}
            type="button"
            className={`mt-[4px] shrink-0 px-[13px] whitespace-nowrap ${tab === 'СПДС' ? 'bg-[#ececec]' : ''}`}
          >
            {tab}
          </button>
        ))}
      </nav>
      <Ribbon />
      <div className="flex min-h-0 flex-1 gap-[4px] pb-[2px]">
        <ElementBasePanel />
        <DrawingArea />
        <div className="w-[3px] shrink-0 border-t border-l border-[#999] bg-[#dedede]" />
      </div>
    </div>
  );
};

export default App;
